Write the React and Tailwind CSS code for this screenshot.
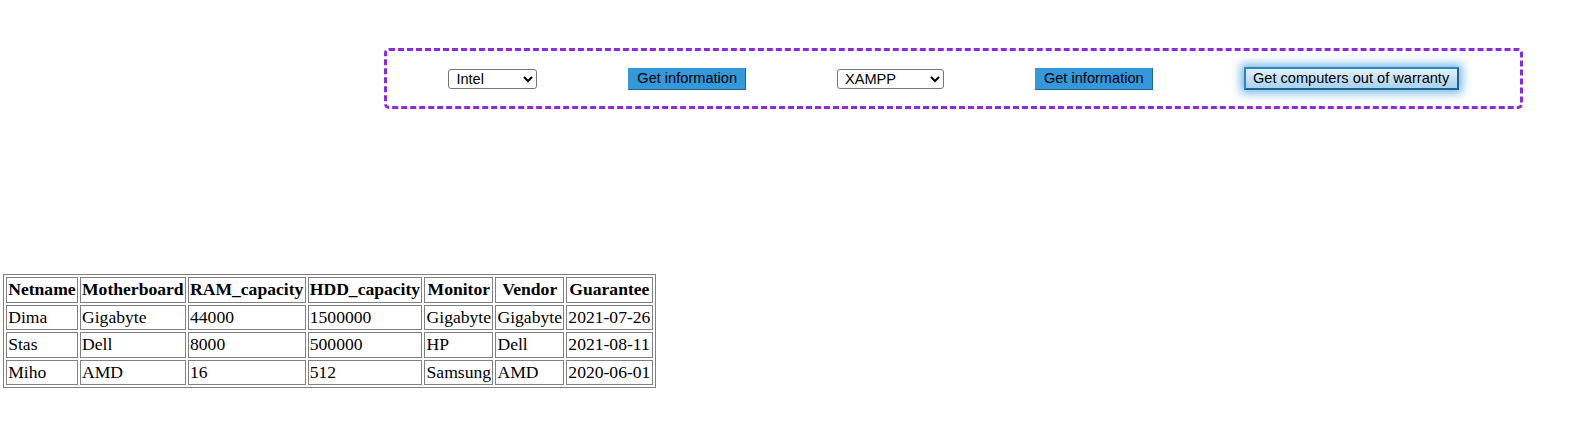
import React from 'react';

const rows = [
  ['Dima', 'Gigabyte', '44000', '1500000', 'Gigabyte', 'Gigabyte', '2021-07-26'],
  ['Stas', 'Dell', '8000', '500000', 'HP', 'Dell', '2021-08-11'],
  ['Miho', 'AMD', '16', '512', 'Samsung', 'AMD', '2020-06-01'],
];

const heads = ['Netname', 'Motherboard', 'RAM_capacity', 'HDD_capacity', 'Monitor', 'Vendor', 'Guarantee'];

export default function App() {
  return (
    <div className="pt-[48px] bg-white text-black">
      <div className="ml-[384px] w-[1139px] h-[61px] border-[3px] border-dashed border-[#8a2be2] rounded-[5px] flex items-center justify-around px-4 font-['Liberation_Sans',Arial,sans-serif] text-[14.6px]">
        <select defaultValue="Intel" className="w-[89px] h-[20px] border border-[#767676] rounded-[3px] bg-white pl-[3px] leading-none">
          <option>Intel</option>
          <option>AMD</option>
        </select>
        <button className="w-[118px] h-[22px] bg-[#3498db] border border-[#3498db] border-r-[#1f6391] border-b-[#1f6391] leading-none">
          Get information
        </button>
        <select defaultValue="XAMPP" className="w-[107px] h-[20px] border border-[#767676] rounded-[3px] bg-white pl-[3px] leading-none">
          <option>XAMPP</option>
          <option>Other</option>
        </select>
        <button className="w-[118px] h-[22px] bg-[#3498db] border border-[#3498db] border-r-[#1f6391] border-b-[#1f6391] leading-none">
          Get information
        </button>
        <button className="w-[215px] h-[23px] bg-gradient-to-b from-[#e3f1fb] to-[#a8d2f0] border-2 border-[#2e86c1] border-r-[#1f6391] border-b-[#1f6391] shadow-[0_0_10px_3px_rgba(52,152,219,0.7)] leading-none">
          Get computers out of warranty
        </button>
      </div>

      <table className="mt-[165px] ml-[3px] border-separate border-spacing-[2px] border border-[#808080] font-['Liberation_Serif','Times_New_Roman',serif] text-[17.6px] leading-[21.5px]">
        <thead>
          <tr>
            {heads.map((h) => (
              <th key={h} className="border border-[#808080] px-[1.2px] py-[1px] font-bold text-center">
                {h}
              </th>
            ))}
          </tr>
        </thead>
        <tbody>
          {rows.map((r) => (
            <tr key={r[0]}>
              {r.map((c, i) => (
                <td key={i} className="border border-[#808080] px-[1.2px] py-[1px] text-left">
                  {c}
                </td>
              ))}
            </tr>
          ))}
        </tbody>
      </table>
    </div>
  );
}
